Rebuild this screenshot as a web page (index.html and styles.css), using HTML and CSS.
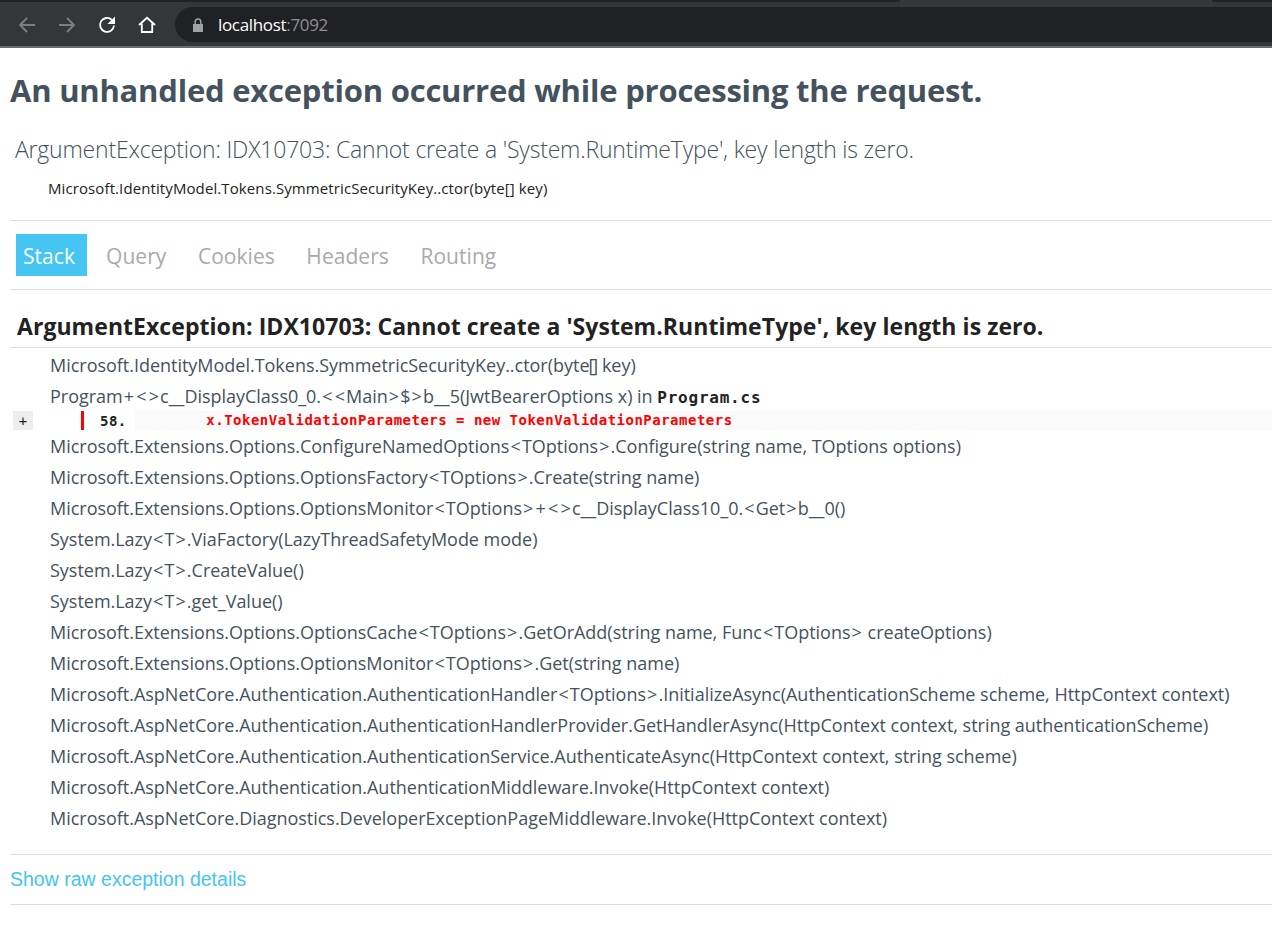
FILE: index.html
```html
<!DOCTYPE html>
<html lang="en">
<head>
<meta charset="utf-8">
<title>Internal Server Error</title>
<link rel="stylesheet" href="styles.css">
</head>
<body>
<header class="browser">
  <div class="tabstrip"><span class="tab-end tab-left"></span><span class="tab-end tab-right"></span></div>
  <div class="toolbar">
    <svg class="icon dim" viewBox="0 0 20 20"><path d="M18 10H3M10 3 3 10l7 7"/></svg>
    <svg class="icon dim" viewBox="0 0 20 20"><path d="M2 10h15M10 3l7 7-7 7"/></svg>
    <svg class="icon" viewBox="0 0 20 20"><path d="M17 10.500A7 7 0 1 1 14.800 4.800"/><path class="fill" d="M18 1.500V9H10.500Z"/></svg>
    <svg class="icon" viewBox="0 0 20 20"><path d="M2 10 10 2.800 18 10M4.800 8.500V17h10.400V8.500"/></svg>
    <div class="address">
      <svg class="lock" viewBox="0 0 12 14"><path class="fill" d="M1 6h10v8H1z"/><path class="shackle" d="M3.200 6V3.800a2.800 2.800 0 0 1 5.600 0V6"/></svg>
      <span class="host">localhost</span><span class="port">:7092</span>
    </div>
  </div>
</header>
<main class="page">
  <h1>An unhandled exception occurred while processing the request.</h1>
  <div class="summary">
    <h2>ArgumentException: IDX10703: Cannot create a 'System.RuntimeType', key length is zero.</h2>
    <p class="location">Microsoft.IdentityModel.Tokens.SymmetricSecurityKey..ctor(byte[] key)</p>
  </div>
  <ul class="tabs">
    <li class="selected">Stack</li>
    <li>Query</li>
    <li>Cookies</li>
    <li>Headers</li>
    <li>Routing</li>
  </ul>
  <div class="stack">
    <h2 class="stackerror">ArgumentException: IDX10703: Cannot create a 'System.RuntimeType', key length is zero.</h2>
    <ul class="frames">
      <li class="frame">Microsoft.IdentityModel.Tokens.SymmetricSecurityKey..ctor(byte<span class="sq">[</span><span class="sq">]</span> key)</li>
      <li class="frame frame-code">Program<span class="op">+</span><span class="op">&lt;</span><span class="op">&gt;</span>c__DisplayClass0_0.<span class="op">&lt;</span><span class="op">&lt;</span>Main<span class="op">&gt;</span>$<span class="op">&gt;</span>b__5(JwtBearerOptions x) in <code class="file">Program.cs</code></li>
      <li class="source">
        <button class="expand">+</button>
        <span class="mark"></span>
        <span class="lineno">58.</span>
        <code class="sourceline">        x.TokenValidationParameters = new TokenValidationParameters</code>
      </li>
      <li class="frame after">Microsoft.Extensions.Options.ConfigureNamedOptions<span class="op">&lt;</span>TOptions<span class="op">&gt;</span>.Configure(string name, TOptions options)</li>
      <li class="frame">Microsoft.Extensions.Options.OptionsFactory<span class="op">&lt;</span>TOptions<span class="op">&gt;</span>.Create(string name)</li>
      <li class="frame">Microsoft.Extensions.Options.OptionsMonitor<span class="op">&lt;</span>TOptions<span class="op">&gt;</span><span class="op">+</span><span class="op">&lt;</span><span class="op">&gt;</span>c__DisplayClass10_0.<span class="op">&lt;</span>Get<span class="op">&gt;</span>b__0()</li>
      <li class="frame">System.Lazy<span class="op">&lt;</span>T<span class="op">&gt;</span>.ViaFactory(LazyThreadSafetyMode mode)</li>
      <li class="frame">System.Lazy<span class="op">&lt;</span>T<span class="op">&gt;</span>.CreateValue()</li>
      <li class="frame">System.Lazy<span class="op">&lt;</span>T<span class="op">&gt;</span>.get_Value()</li>
      <li class="frame">Microsoft.Extensions.Options.OptionsCache<span class="op">&lt;</span>TOptions<span class="op">&gt;</span>.GetOrAdd(string name, Func<span class="op">&lt;</span>TOptions<span class="op">&gt;</span> createOptions)</li>
      <li class="frame">Microsoft.Extensions.Options.OptionsMonitor<span class="op">&lt;</span>TOptions<span class="op">&gt;</span>.Get(string name)</li>
      <li class="frame">Microsoft.AspNetCore.Authentication.AuthenticationHandler<span class="op">&lt;</span>TOptions<span class="op">&gt;</span>.InitializeAsync(AuthenticationScheme scheme, HttpContext context)</li>
      <li class="frame">Microsoft.AspNetCore.Authentication.AuthenticationHandlerProvider.GetHandlerAsync(HttpContext context, string authenticationScheme)</li>
      <li class="frame">Microsoft.AspNetCore.Authentication.AuthenticationService.AuthenticateAsync(HttpContext context, string scheme)</li>
      <li class="frame">Microsoft.AspNetCore.Authentication.AuthenticationMiddleware.Invoke(HttpContext context)</li>
      <li class="frame">Microsoft.AspNetCore.Diagnostics.DeveloperExceptionPageMiddleware.Invoke(HttpContext context)</li>
    </ul>
  </div>
  <div class="raw"><a href="#">Show raw exception details</a></div>
</main>
</body>
</html>
```

FILE: styles.css
```css
* { box-sizing: border-box; }
html, body { margin: 0; padding: 0; background: #fff; }
body { font-family: "Open Sans", "Noto Sans", sans-serif; color: #222; overflow: hidden; }

.browser { height: 48px; background: #35363a; border-bottom: 2px solid #6a6b6e; }
.tabstrip { height: 7px; position: relative; }
.tab-end { position: absolute; top: 0; height: 2px; background: #202124; }
.tab-left { left: 0; width: 900px; border-bottom-right-radius: 4px; }
.tab-right { right: 0; width: 60px; border-bottom-left-radius: 4px; }
.toolbar { height: 35px; display: flex; align-items: center; padding-left: 17px; gap: 20px; }
.icon { width: 20px; height: 20px; flex: none; fill: none; stroke: #fff; stroke-width: 1.8; }
.icon.dim { stroke: #7d7e81; }
.fill { fill: #fff; stroke: none; }
.address { flex: 1; height: 35px; background: #202124; border-radius: 18px 0 0 18px; display: flex; align-items: center; padding-left: 17px; margin-left: -2px; font-size: 17px; letter-spacing: -.33px; }
.lock { width: 12px; height: 14px; margin-right: 14px; }
.lock .fill { fill: #a0a1a4; }
.shackle { fill: none; stroke: #a0a1a4; stroke-width: 1.500; }
.host { color: #fff; }
.port { color: #8f9094; }

.page { padding: 0 0 0 10px; }
h1 { margin: 22px 0 0; height: 41px; line-height: 41px; font-size: 31px; font-weight: 700; color: #44525e; letter-spacing: -.22px; white-space: nowrap; }
.summary { height: 110px; border-bottom: 1px solid #ddd; padding-top: 23px; }
.summary h2 { margin: 0 0 0 5px; font-size: 23px; line-height: 30px; font-weight: 300; color: #44525e; letter-spacing: -.2px; white-space: nowrap; }
.location { margin: 14px 0 0 38px; font-size: 15px; line-height: 20px; color: #222; letter-spacing: .1px; }

.tabs { list-style: none; margin: 0; padding: 13px 0 13px 6px; display: flex; gap: 0; height: 69px; border-bottom: 1px solid #ddd; }
.tabs li { height: 42px; line-height: 44px; padding: 0 7px; margin-right: 17.500px; font-size: 21px; color: #a9a9a9; letter-spacing: .05px; }
.tabs li.selected { background: #44c5f2; color: #fff; padding-right: 12px; margin-right: 12px; }

.stackerror { margin: 0; height: 58px; padding: 21px 0 0 7px; line-height: 31px; font-size: 23px; font-weight: 700; color: #222; border-bottom: 1px solid #ddd; letter-spacing: .05px; white-space: nowrap; }
.frames { list-style: none; margin: 0; padding: 2px 0 0; height: 507px; border-bottom: 1px solid #ddd; }
.frame { height: 31px; line-height: 31px; padding-left: 40px; font-size: 18px; color: #44525e; letter-spacing: -.02px; white-space: nowrap; }
.op { padding: 0 1.100px; }
.sq { margin: 0 -1px; }
.file { font-family: "DejaVu Sans Mono", monospace; font-weight: 700; font-size: 16px; color: #222; letter-spacing: .77px; }
.source { height: 19px; margin-top: -1px; display: flex; align-items: center; position: relative; font-size: 13px; }
.after { margin-top: 1px; }
.expand { width: 20px; height: 19px; margin-left: 3px; padding: 0; border: 0; background: #eee; font: 400 14px "DejaVu Sans Mono", monospace; color: #222; }
.mark { width: 3px; height: 19px; margin-left: 48px; background: #f00; }
.lineno { width: 51px; padding-left: 16px; font: 700 14px "DejaVu Sans Mono", monospace; letter-spacing: .5px; color: #222; white-space: pre; }
.sourceline { flex: 1; height: 19px; background: #fafafa; font: 700 14px/19px "DejaVu Sans Mono", monospace; letter-spacing: .49px; color: #f00; white-space: pre; }

.raw { height: 50px; border-bottom: 1px solid #ddd; line-height: 49px; font-family: "Liberation Sans", Arial, sans-serif; font-size: 19.5px; }
.raw a { color: #44c5f2; text-decoration: none; }
```
